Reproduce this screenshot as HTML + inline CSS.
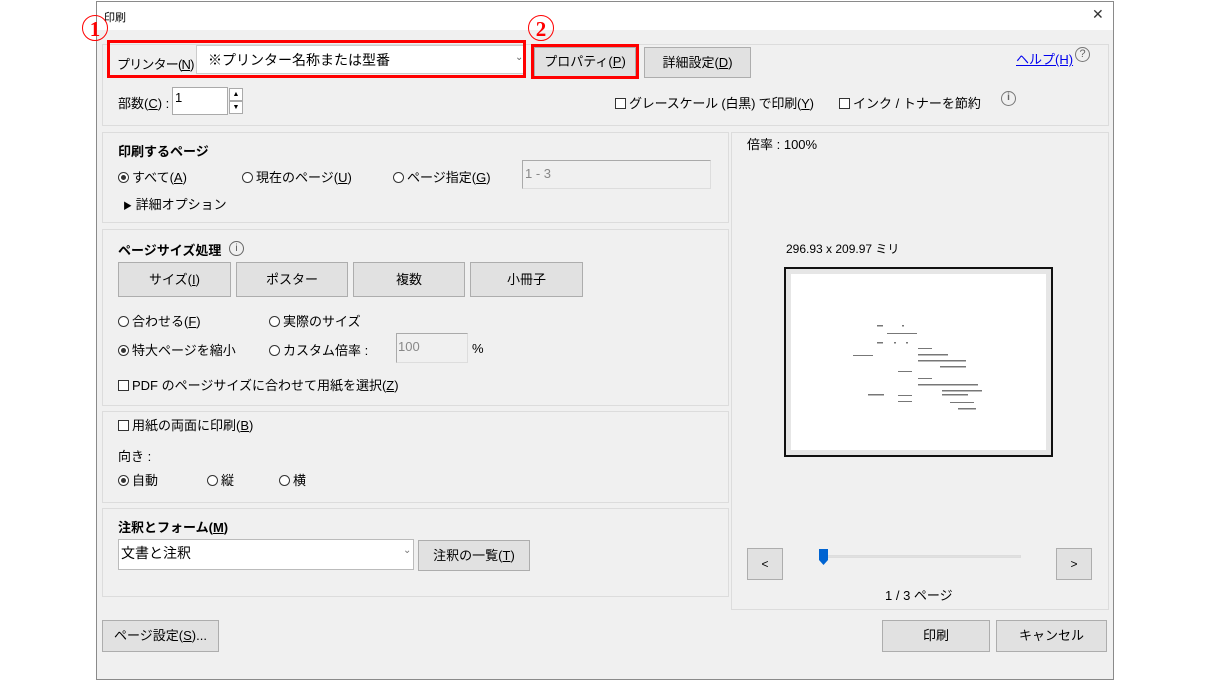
<!DOCTYPE html>
<html><head><meta charset="utf-8"><style>
*{box-sizing:border-box;margin:0;padding:0}
body{width:1210px;height:681px;background:#fff;position:relative;overflow:hidden;font-family:"Liberation Sans","Noto Sans CJK JP",sans-serif;font-size:13px;color:#000}
.a{position:absolute;white-space:nowrap}
.dlg{position:absolute;left:96px;top:1px;width:1018px;height:679px;border:1px solid #8a8a8a;background:#f0f0f0}
.tb{position:absolute;left:97px;top:2px;width:1016px;height:28px;background:#fff}
.grp{position:absolute;border:1px solid #dcdcdc;background:#f0f0f0}
.btn{position:absolute;background:#e1e1e1;border:1px solid #adadad;text-align:center;font-size:13px}
.fld{position:absolute;background:#fff;border:1px solid #7a7a7a}
.dis{position:absolute;background:#f0f0f0;border:1px solid #ccc;color:#888}
.rad{display:inline-block;width:11px;height:11px;border:1px solid #333;border-radius:50%;vertical-align:-1px;margin-right:3px;position:relative;background:#fff}
.rad.on::after{content:"";position:absolute;left:2px;top:2px;width:5px;height:5px;border-radius:50%;background:#333}
.chk{display:inline-block;width:11px;height:11px;border:1px solid #333;vertical-align:-1px;margin-right:3px;background:#fff}
.red{position:absolute;border:3px solid #f00}
.circ{position:absolute;width:26px;height:26px;border:1px solid #f00;border-radius:50%;color:#f00;font-weight:bold;font-size:21px;text-align:center;line-height:26px;font-family:"Liberation Serif",serif}
u{text-decoration:underline}
</style></head><body>
<div class="dlg"></div>
<div class="tb"></div>
<div class="a" style="left:104px;top:9px;font-size:11px">印刷</div>
<div class="a" style="left:1092px;top:6px;font-size:14px;color:#333">✕</div>
<div class="circ" style="left:82px;top:15px">1</div>
<div class="circ" style="left:528px;top:15px">2</div>

<div class="grp" style="left:102px;top:44px;width:1007px;height:82px"></div>
<div class="a" style="left:117px;top:54px;letter-spacing:-0.8px">プリンター(<u>N</u>) :</div>
<div class="fld" style="left:196px;top:45px;width:329px;height:29px;border-color:#ccc"></div>
<div class="a" style="left:208px;top:50px;font-size:14px">※プリンター名称または型番</div>
<div class="a" style="left:515px;top:52px;font-size:10px;color:#666">⌄</div>
<div class="red" style="left:107px;top:40px;width:419px;height:38px"></div>
<div class="btn" style="left:534px;top:47px;width:102px;height:30px;line-height:28px">プロパティ(<u>P</u>)</div>
<div class="red" style="left:531px;top:44px;width:108px;height:35px"></div>
<div class="btn" style="left:644px;top:47px;width:107px;height:31px;line-height:29px">詳細設定(<u>D</u>)</div>
<div class="a" style="left:1016px;top:49px;color:#00e;text-decoration:underline">ヘルプ(H)</div>
<div class="a" style="left:1075px;top:47px;width:15px;height:15px;border:1.5px solid #777;border-radius:50%;font-size:11px;text-align:center;line-height:12px;color:#666">?</div>
<div class="a" style="left:118px;top:93px">部数(<u>C</u>) :</div>
<div class="fld" style="left:172px;top:87px;width:56px;height:28px;border-color:#aaa"></div>
<div class="a" style="left:175px;top:90px">1</div>
<div class="a" style="left:229px;top:88px;width:14px;height:13px;border:1px solid #aaa;background:#fff;font-size:7px;text-align:center;line-height:11px">▲</div>
<div class="a" style="left:229px;top:101px;width:14px;height:13px;border:1px solid #aaa;background:#fff;font-size:7px;text-align:center;line-height:11px">▼</div>
<div class="a" style="left:615px;top:93px;letter-spacing:-0.2px"><span class="chk"></span>グレースケール (白黒) で印刷(<u>Y</u>)</div>
<div class="a" style="left:839px;top:93px"><span class="chk"></span>インク / トナーを節約</div>
<div class="a" style="left:1001px;top:91px;width:15px;height:15px;border:1.5px solid #777;border-radius:50%;font-size:10px;text-align:center;line-height:12px;color:#666;font-weight:bold">i</div>

<div class="grp" style="left:102px;top:132px;width:627px;height:91px"></div>
<div class="a" style="left:118px;top:141px;font-weight:bold">印刷するページ</div>
<div class="a" style="left:118px;top:167px"><span class="rad on"></span>すべて(<u>A</u>)</div>
<div class="a" style="left:242px;top:167px"><span class="rad"></span>現在のページ(<u>U</u>)</div>
<div class="a" style="left:393px;top:167px"><span class="rad"></span>ページ指定(<u>G</u>)</div>
<div class="dis" style="left:522px;top:160px;width:189px;height:29px;border-color:#aaa #ddd #ddd #aaa"></div>
<div class="a" style="left:525px;top:166px;color:#888">1 - 3</div>
<div class="a" style="left:123px;top:194px"><span style="font-size:9px">▶</span> 詳細オプション</div>

<div class="grp" style="left:102px;top:229px;width:627px;height:177px"></div>
<div class="a" style="left:118px;top:240px;font-weight:bold">ページサイズ処理</div>
<div class="a" style="left:229px;top:241px;width:15px;height:15px;border:1px solid #666;border-radius:50%;font-size:10px;text-align:center;line-height:13px;color:#555">i</div>
<div class="btn" style="left:118px;top:262px;width:113px;height:35px;line-height:33px">サイズ(<u>I</u>)</div>
<div class="btn" style="left:236px;top:262px;width:112px;height:35px;line-height:33px">ポスター</div>
<div class="btn" style="left:353px;top:262px;width:112px;height:35px;line-height:33px">複数</div>
<div class="btn" style="left:470px;top:262px;width:113px;height:35px;line-height:33px">小冊子</div>
<div class="a" style="left:118px;top:311px"><span class="rad"></span>合わせる(<u>F</u>)</div>
<div class="a" style="left:269px;top:311px"><span class="rad"></span>実際のサイズ</div>
<div class="a" style="left:118px;top:340px"><span class="rad on"></span>特大ページを縮小</div>
<div class="a" style="left:269px;top:340px"><span class="rad"></span>カスタム倍率 :</div>
<div class="dis" style="left:396px;top:333px;width:72px;height:30px;border-color:#aaa #ddd #ddd #aaa"></div>
<div class="a" style="left:398px;top:339px;color:#888">100</div>
<div class="a" style="left:472px;top:341px">%</div>
<div class="a" style="left:118px;top:375px"><span class="chk"></span>PDF のページサイズに合わせて用紙を選択(<u>Z</u>)</div>

<div class="grp" style="left:102px;top:411px;width:627px;height:92px"></div>
<div class="a" style="left:118px;top:415px"><span class="chk"></span>用紙の両面に印刷(<u>B</u>)</div>
<div class="a" style="left:118px;top:446px">向き :</div>
<div class="a" style="left:118px;top:470px"><span class="rad on"></span>自動</div>
<div class="a" style="left:207px;top:470px"><span class="rad"></span>縦</div>
<div class="a" style="left:279px;top:470px"><span class="rad"></span>横</div>

<div class="grp" style="left:102px;top:508px;width:627px;height:89px"></div>
<div class="a" style="left:118px;top:517px;font-weight:bold">注釈とフォーム(<u>M</u>)</div>
<div class="fld" style="left:118px;top:539px;width:296px;height:31px;border-color:#bbb"></div>
<div class="a" style="left:121px;top:543px;font-size:14px">文書と注釈</div>
<div class="a" style="left:403px;top:545px;font-size:10px;color:#777">⌄</div>
<div class="btn" style="left:418px;top:540px;width:112px;height:31px;line-height:29px">注釈の一覧(<u>T</u>)</div>

<div class="btn" style="left:102px;top:620px;width:117px;height:32px;line-height:30px">ページ設定(<u>S</u>)...</div>

<div class="grp" style="left:731px;top:132px;width:378px;height:478px"></div>
<div class="a" style="left:747px;top:134px">倍率 : 100%</div>
<div class="a" style="left:786px;top:240px;font-size:12px">296.93 x 209.97 ミリ</div>
<div class="a" style="left:784px;top:267px;width:269px;height:190px;border:2px solid #111;background:#e6e6e6"></div>
<div class="a" style="left:791px;top:274px;width:255px;height:176px;background:#fff"></div>
<svg class="a" style="left:850px;top:320px" width="150" height="95">
<g fill="#777">
<rect x="27" y="5" width="6" height="1.5"/><rect x="52" y="5" width="2" height="1.5"/>
<rect x="37" y="13" width="30" height="1"/>
<rect x="27" y="22" width="6" height="1.5"/><rect x="44" y="22" width="2" height="1.5"/><rect x="56" y="22" width="2" height="1.5"/>
<rect x="68" y="28" width="14" height="1"/>
<rect x="3" y="35" width="20" height="1"/><rect x="68" y="34" width="30" height="1.5"/>
<rect x="68" y="40" width="48" height="1.5"/><rect x="90" y="46" width="26" height="1.5"/>
<rect x="48" y="51" width="14" height="1"/><rect x="68" y="58" width="14" height="1"/>
<rect x="68" y="64" width="60" height="1.5"/>
<rect x="92" y="70" width="40" height="1.5"/><rect x="92" y="74" width="26" height="1.5"/>
<rect x="18" y="74" width="16" height="1.5"/><rect x="48" y="75" width="14" height="1"/>
<rect x="48" y="81" width="14" height="1"/><rect x="100" y="82" width="24" height="1"/><rect x="108" y="88" width="18" height="1.5"/>
</g></svg>
<div class="btn" style="left:747px;top:548px;width:36px;height:32px;line-height:30px;font-size:12px">&lt;</div>
<div class="btn" style="left:1056px;top:548px;width:36px;height:32px;line-height:30px;font-size:12px">&gt;</div>
<div class="a" style="left:825px;top:555px;width:196px;height:3px;background:#e0e0e0;border:1px solid #ddd"></div>
<svg class="a" style="left:818px;top:548px" width="11" height="18"><path d="M1 1H10V12L5.5 17L1 12Z" fill="#0064d2"/></svg>
<div class="a" style="left:885px;top:585px">1 / 3 ページ</div>
<div class="btn" style="left:882px;top:620px;width:108px;height:32px;line-height:30px">印刷</div>
<div class="btn" style="left:996px;top:620px;width:111px;height:32px;line-height:30px">キャンセル</div>
</body></html>
